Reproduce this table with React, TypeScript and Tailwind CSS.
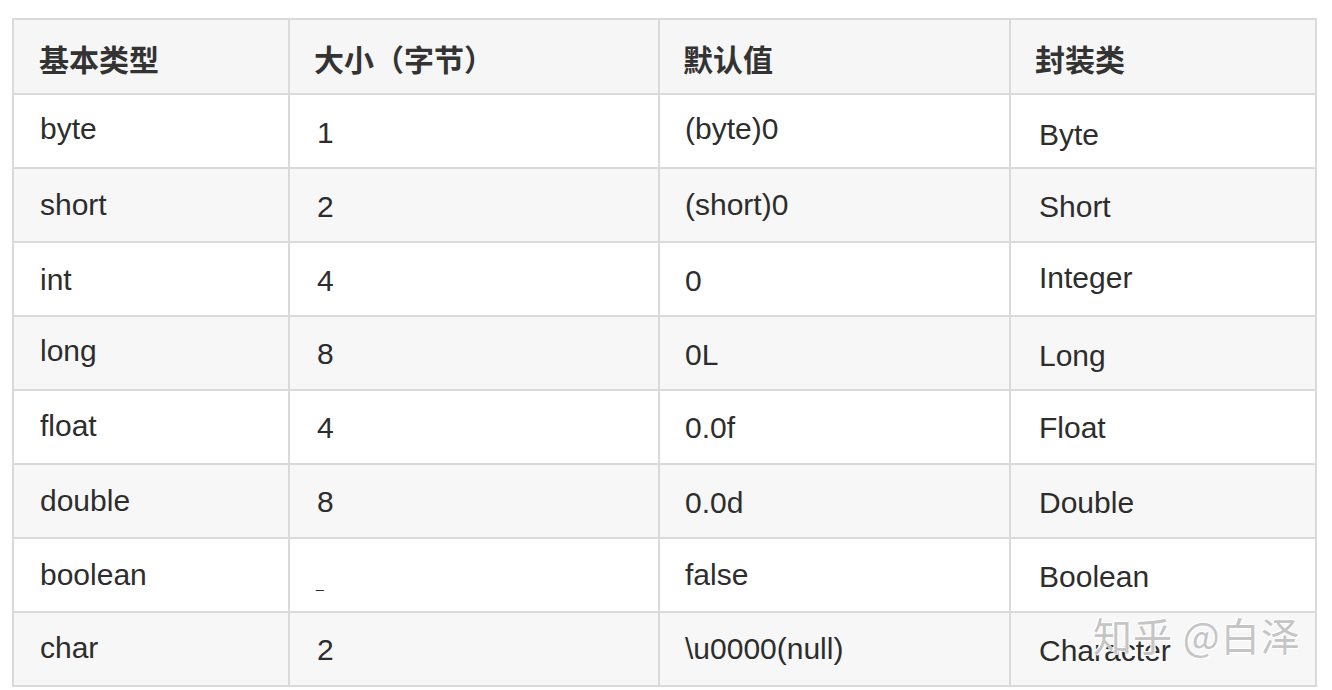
const filas: { tipo: string; tam: string; def: string; clase: string; dy: string[] }[] = [
  { tipo: "byte", tam: "1", def: "(byte)0", clase: "Byte", dy: ["-mt-[6px]", "mt-[2px]", "-mt-[6px]", "mt-[6px]"] },
  { tipo: "short", tam: "2", def: "(short)0", clase: "Short", dy: ["-mt-[2px]", "mt-[2px]", "-mt-[2px]", "mt-[2px]"] },
  { tipo: "int", tam: "4", def: "0", clase: "Integer", dy: ["mt-[0px]", "mt-[2px]", "mt-[2px]", "-mt-[3px]"] },
  { tipo: "long", tam: "8", def: "0L", clase: "Long", dy: ["-mt-[6px]", "mt-[0px]", "mt-[2px]", "mt-[4px]"] },
  { tipo: "float", tam: "4", def: "0.0f", clase: "Float", dy: ["-mt-[4px]", "mt-[0px]", "mt-[0px]", "mt-[0px]"] },
  { tipo: "double", tam: "8", def: "0.0d", clase: "Double", dy: ["-mt-[2px]", "mt-[0px]", "mt-[2px]", "mt-[2px]"] },
  { tipo: "boolean", tam: "_", def: "false", clase: "Boolean", dy: ["-mt-[2px]", "mt-[0px]", "-mt-[2px]", "mt-[2px]"] },
  { tipo: "char", tam: "2", def: "\\u0000(null)", clase: "Character", dy: ["-mt-[4px]", "mt-[0px]", "-mt-[2px]", "mt-[2px]"] },
];

const padCol = ["pl-[26px]", "pl-[27px]", "pl-[25px]", "pl-[28px]"];
const padCabecera = ["pl-[25px]", "pl-[24px]", "pl-[23px]", "pl-[24px]"];

function Celda({ texto, col, extra }: { texto: string; col: number; extra: string }) {
  return (
    <div className={`flex items-center h-full border-r-2 border-b-2 border-[#dadada] ${padCol[col]}`}>
      <span className={extra}>{texto}</span>
    </div>
  );
}

export default function App() {
  const cabecera = ["基本类型", "大小（字节）", "默认值", "封装类"];
  return (
    <div className="w-[1332px] h-[690px] bg-white pt-[18px] pl-[12px] relative overflow-hidden">
      <div
        className="w-[1305px] border-t-2 border-l-2 border-[#dadada] text-[#2d2d2d]"
        style={{ fontFamily: '"Liberation Sans", "Noto Sans CJK SC", sans-serif' }}
      >
        <div className="grid grid-cols-[276px_370px_351px_306px] h-[75px] bg-[#f6f6f6] text-[30px] font-bold text-[#333333]">
          {cabecera.map((h, i) => (
            <div key={h} className={`flex items-center border-r-2 border-b-2 border-[#dadada] ${padCabecera[i]}`}>
              <span className="mt-[8px]">{h}</span>
            </div>
          ))}
        </div>
        {filas.map((f, idx) => (
          <div
            key={f.tipo}
            className={`grid grid-cols-[276px_370px_351px_306px] h-[74px] text-[30px] ${idx % 2 === 1 ? "bg-[#f7f7f7]" : "bg-white"}`}
          >
            <Celda texto={f.tipo} col={0} extra={f.dy[0]} />
            {f.tam === "_" ? (
              <div className="flex items-center h-full border-r-2 border-b-2 border-[#dadada] pl-[26px]">
                <span className="text-[14px] mt-[16px]">_</span>
              </div>
            ) : (
              <Celda texto={f.tam} col={1} extra={f.dy[1]} />
            )}
            <Celda texto={f.def} col={2} extra={f.dy[2]} />
            <Celda texto={f.clase} col={3} extra={f.dy[3]} />
          </div>
        ))}
      </div>
      {/* marca de agua */}
      <div
        className="absolute left-[1093px] top-[605px] text-[39px] text-[#bdbdbd]/90 tracking-[1px]"
        style={{ fontFamily: '"Noto Sans CJK SC", sans-serif', textShadow: "1px 1px 0 #ffffff, -1px -1px 0 #ffffff" }}
      >
        知乎 @白泽
      </div>
    </div>
  );
}
